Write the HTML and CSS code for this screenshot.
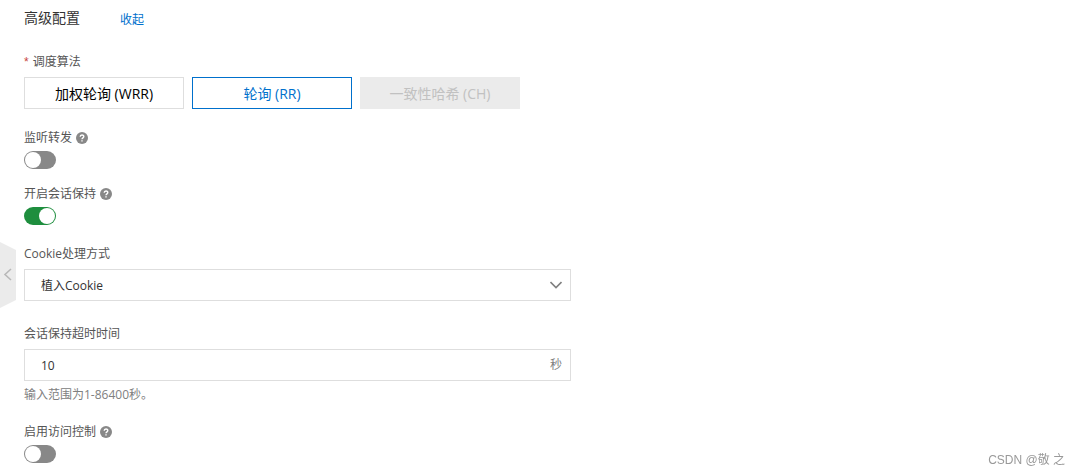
FILE: index.html
```html
<!DOCTYPE html>
<html lang="zh-CN">
<head>
    <meta charset="UTF-8">
    <meta name="viewport" content="width=device-width, initial-scale=1.0">
    <title>高级配置</title>
    <link rel="stylesheet" href="styles.css">
</head>
<body>
    <button type="button" class="collapse-btn" aria-label="收起侧栏">
        <svg width="16" height="66" viewBox="0 0 16 66">
            <path d="M0 0 L16 8 V58 L0 66 Z" fill="#ebebeb"/>
            <path d="M11 27 L5 32.5 L11 38" fill="none" stroke="#b8b8b8" stroke-width="1.6"/>
        </svg>
    </button>

    <form class="config">
        <div class="config-header">
            <h2>高级配置</h2>
            <a href="#">收起</a>
        </div>

        <!-- 调度算法 -->
        <fieldset class="field">
            <legend class="field-label"><span class="required">*</span> 调度算法</legend>
            <div class="radio-group">
                <label class="radio-btn"><input type="radio" name="scheduler" value="wrr"><span>加权轮询 (WRR)</span></label>
                <label class="radio-btn"><input type="radio" name="scheduler" value="rr" checked><span>轮询 (RR)</span></label>
                <label class="radio-btn"><input type="radio" name="scheduler" value="ch" disabled><span>一致性哈希 (CH)</span></label>
            </div>
        </fieldset>

        <div class="field switch-field">
            <div class="field-label">
                <label for="forward">监听转发</label>
                <svg class="help-icon" viewBox="0 0 12 12">
                    <circle cx="6" cy="6" r="6" fill="#888"/>
                    <path d="M4.2 4.8 C4.2 2.5 7.8 2.5 7.8 4.6 C7.8 5.9 6 5.8 6 7.3 M6 8.2 V9.6" fill="none" stroke="#fff" stroke-width="1.4"/>
                </svg>
            </div>
            <input type="checkbox" class="switch" id="forward">
        </div>

        <!-- 会话保持 -->
        <div class="field switch-field session-field">
            <div class="field-label">
                <label for="session">开启会话保持</label>
                <svg class="help-icon" viewBox="0 0 12 12">
                    <circle cx="6" cy="6" r="6" fill="#888"/>
                    <path d="M4.2 4.8 C4.2 2.5 7.8 2.5 7.8 4.6 C7.8 5.9 6 5.8 6 7.3 M6 8.2 V9.6" fill="none" stroke="#fff" stroke-width="1.4"/>
                </svg>
            </div>
            <input type="checkbox" class="switch" id="session" checked>
        </div>

        <div class="field select-field">
            <label class="field-label" for="cookie">Cookie处理方式</label>
            <div class="control">
                <select id="cookie">
                    <option selected>植入Cookie</option>
                    <option>重写Cookie</option>
                </select>
                <svg class="arrow" width="12" height="8" viewBox="0 0 12 8">
                    <path d="M0.5 1 L6 6.5 L11.5 1" fill="none" stroke="#808080" stroke-width="1.6"/>
                </svg>
            </div>
        </div>

        <div class="field timeout-field">
            <label class="field-label" for="timeout">会话保持超时时间</label>
            <div class="control">
                <input type="text" id="timeout" value="10">
                <span class="unit">秒</span>
            </div>
            <p class="hint">输入范围为1-86400秒。</p>
        </div>

        <!-- 访问控制 -->
        <div class="field switch-field">
            <div class="field-label">
                <label for="acl">启用访问控制</label>
                <svg class="help-icon" viewBox="0 0 12 12">
                    <circle cx="6" cy="6" r="6" fill="#888"/>
                    <path d="M4.2 4.8 C4.2 2.5 7.8 2.5 7.8 4.6 C7.8 5.9 6 5.8 6 7.3 M6 8.2 V9.6" fill="none" stroke="#fff" stroke-width="1.4"/>
                </svg>
            </div>
            <input type="checkbox" class="switch" id="acl">
        </div>
    </form>

    <div class="watermark">CSDN @敬 之</div>
</body>
</html>
```
FILE: styles.css
```css
* {
    box-sizing: border-box;
}

body {
    margin: 0;
    background: #fff;
    color: #555;
    font-family: "Open Sans", "Noto Sans CJK SC", sans-serif;
    font-size: 12px;
    line-height: 20px;
}

input, select, button {
    margin: 0;
    font: inherit;
}

.config {
    padding: 8px 24px 0;
}

.config-header {
    display: flex;
    align-items: center;
    gap: 40px;
    margin-bottom: 24px;
}

.config-header h2 {
    margin: 0;
    color: #333;
    font-size: 14px;
    font-weight: normal;
}

.config-header a {
    padding-top: 4px;
    line-height: 16px;
    color: #0070cc;
    text-decoration: none;
}

.field {
    margin: 0 0 19px;
    padding: 0;
    border: none;
}

.field-label {
    display: flex;
    align-items: center;
    gap: 4px;
    margin-bottom: 5px;
    padding: 0;
}

.required {
    color: #c84540;
    font-family: "Liberation Sans", sans-serif;
}

.help-icon {
    width: 12px;
    height: 12px;
}

/* 调度算法按钮 */
.radio-group {
    display: flex;
    flex-wrap: wrap;
    gap: 8px;
}

.radio-btn {
    position: relative;
    width: 160px;
    height: 32px;
    color: #000;
    font-size: 14px;
    line-height: 32px;
    text-align: center;
    cursor: pointer;
}

.radio-btn input {
    position: absolute;
    opacity: 0;
}

.radio-btn span {
    display: block;
    height: 32px;
    border: 1px solid #dedede;
}

.radio-btn input:checked + span {
    border-color: #0070cc;
    color: #0070cc;
}

.radio-btn input:disabled + span {
    border-color: #ebebeb;
    background: #ebebeb;
    color: #c1c1c1;
    cursor: not-allowed;
}

/* 开关 */
.switch-field {
    margin-bottom: 15px;
}

.switch-field .field-label {
    margin-bottom: 3px;
}

.session-field {
    margin-bottom: 19px;
}

.switch {
    appearance: none;
    display: flex;
    width: 32px;
    height: 18px;
    padding: 1px;
    border-radius: 9px;
    background: #888;
    cursor: pointer;
}

.switch::before {
    content: "";
    width: 16px;
    height: 16px;
    border-radius: 50%;
    background: #fff;
}

.switch:checked {
    justify-content: flex-end;
    background: #1e8e3e;
}

/* 下拉框和输入框 */
.select-field {
    margin-bottom: 23px;
}

.timeout-field {
    margin-bottom: 17px;
}

.control {
    position: relative;
    max-width: 547px;
}

.control select,
.control input {
    display: block;
    appearance: none;
    width: 100%;
    height: 32px;
    padding: 0 32px 0 16px;
    border: 1px solid #dedede;
    border-radius: 0;
    background: #fff;
    color: #333;
}

.control select {
    padding-top: 2px;
}

.arrow,
.unit {
    position: absolute;
    top: 50%;
    right: 9px;
    transform: translateY(-50%);
    color: #808080;
    pointer-events: none;
}

.hint {
    margin: 4px 0 0;
    color: #808080;
}

/* 左侧收起按钮 */
.collapse-btn {
    position: fixed;
    top: 242px;
    left: 0;
    padding: 0;
    border: none;
    background: none;
    cursor: pointer;
}

.collapse-btn svg {
    display: block;
}

.watermark {
    position: fixed;
    right: 15px;
    bottom: 5px;
    color: #999;
    font-family: "Liberation Sans", "Noto Sans CJK SC", sans-serif;
}
```
